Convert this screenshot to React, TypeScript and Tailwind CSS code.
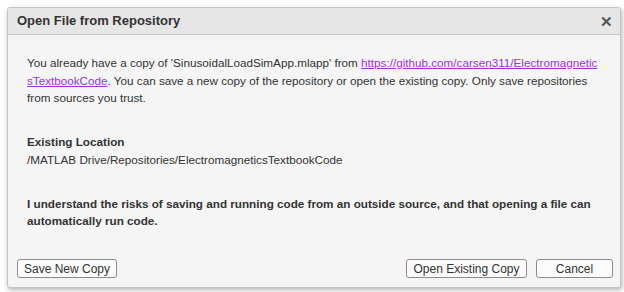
export default function App() {
  return (
    <div className="w-[624px] h-[292px] bg-white pt-[7px] pl-[7px] font-['Liberation_Sans',Arial,sans-serif] text-[#333]">
      <div className="w-[614px] h-[281px] flex flex-col border border-[#c4c4c4] rounded-[3px] bg-[#f5f5f5] shadow-[1px_2px_5px_rgba(0,0,0,0.3)] overflow-hidden">
        {/* Title bar */}
        <div className="h-[27px] shrink-0 flex items-center justify-between pl-[9px] pr-[7px] bg-[#e6e6e6] border-b border-[#c9c9c9]">
          <span className="text-[13px] font-bold text-[#333]">Open File from Repository</span>
          <span className="text-[15px] font-bold text-[#555] leading-none">✕</span>
        </div>

        {/* Body */}
        <div className="flex-1 flex flex-col pt-[19px] pl-[19px] pr-[10px] text-[11.7px] leading-[17.5px]">
          <p>
            You already have a copy of 'SinusoidalLoadSimApp.mlapp' from{" "}
            <a className="text-[#9b32e0] underline" href="#">
              https://github.com/carsen311/Electromagnetic
              <br />
              sTextbookCode
            </a>
            . You can save a new copy of the repository or open the existing copy. Only save repositories
            from sources you trust.
          </p>

          <div className="mt-[26.5px]">
            <div className="font-bold">Existing Location</div>
            <div>/MATLAB Drive/Repositories/ElectromagneticsTextbookCode</div>
          </div>

          <p className="mt-[26.5px] font-bold">
            I understand the risks of saving and running code from an outside source, and that opening a file can
            automatically run code.
          </p>
        </div>

        {/* Buttons */}
        <div className="flex items-center pl-[9px] pr-[7px] pb-[9px] text-[12px]">
          <button className="w-[100px] h-[19px] border border-[#8c8c8c] rounded-[3px] bg-[#fbfbfb] text-[#333] leading-none">
            Save New Copy
          </button>
          <div className="flex-1" />
          <button className="w-[121px] h-[19px] border border-[#8c8c8c] rounded-[3px] bg-[#fbfbfb] text-[#333] leading-none">
            Open Existing Copy
          </button>
          <button className="ml-[9px] w-[77px] h-[19px] border border-[#8c8c8c] rounded-[3px] bg-[#fbfbfb] text-[#333] leading-none">
            Cancel
          </button>
        </div>
      </div>
    </div>
  );
}
